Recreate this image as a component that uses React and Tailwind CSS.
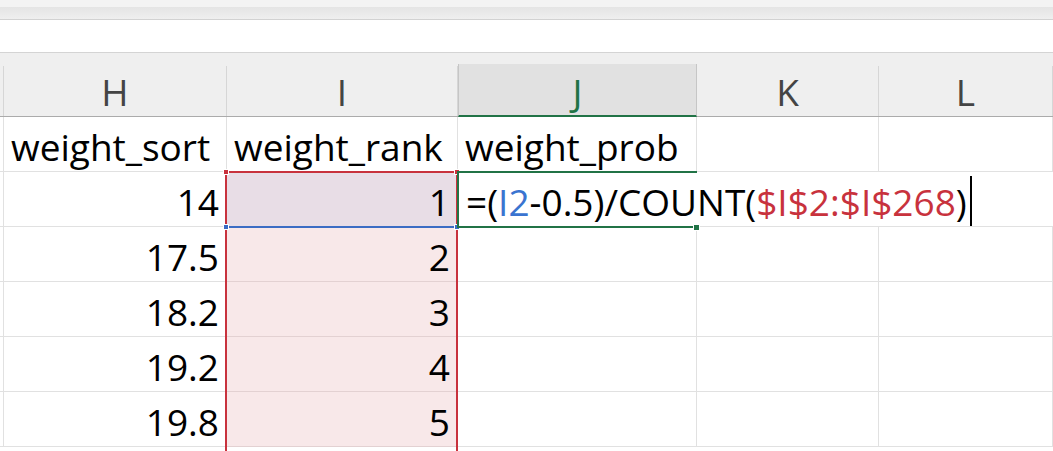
import React from 'react';

const font = { fontFamily: '"Open Sans", "Noto Sans", sans-serif' };

const COLS = [
  { key: 'H', w: 'w-[223px]' },
  { key: 'I', w: 'w-[231px]' },
  { key: 'J', w: 'w-[239px]' },
  { key: 'K', w: 'w-[182px]' },
  { key: 'L', w: 'flex-1' },
];

const rows = [
  { h: '14', i: '1' },
  { h: '17.5', i: '2' },
  { h: '18.2', i: '3' },
  { h: '19.2', i: '4' },
  { h: '19.8', i: '5' },
];

function Cell({ w, className = '', children }) {
  return (
    <div className={`${w} shrink-0 h-[55px] border-r border-b border-[#e1e1e1] flex items-end pb-[6px] px-[7px] ${className}`}>
      {children}
    </div>
  );
}

function Handle({ className }) {
  return <div className={`absolute w-[6px] h-[6px] border border-white ${className}`} />;
}

export default function App() {
  return (
    <div className="w-[1053px] h-[451px] overflow-hidden bg-white text-black" style={font}>
      {/* ribbon edge */}
      <div className="h-[7px] bg-[#f3f3f3]" />
      <div className="h-[12px] bg-gradient-to-b from-[#e4e4e4] to-[#efefef]" />
      <div className="h-px bg-[#d2d2d2]" />
      <div className="h-[33px] bg-white border-b border-[#d4d4d4]" />

      {/* column headers */}
      <div className="h-[64px] bg-[#efefef] border-b border-[#ababab] flex items-end text-[37px] text-[#444444]">
        <div className="w-[4px] h-[50px] border-r border-[#d6d6d6] shrink-0" />
        {COLS.map((c) =>
          c.key === 'J' ? (
            <div
              key={c.key}
              className={`${c.w} shrink-0 h-[53px] -mb-px bg-[#e1e1e1] border-l border-r border-[#c6c6c6] border-b-2 border-b-[#217346] flex items-end justify-center pb-[1px] leading-none text-[#217346]`}
            >
              <span className="pb-[4px]">{c.key}</span>
            </div>
          ) : (
            <div
              key={c.key}
              className={`${c.w} shrink-0 h-[50px] border-r border-[#d6d6d6] flex items-end justify-center pb-[6px] leading-none`}
            >
              {c.key}
            </div>
          )
        )}
      </div>

      {/* grid body */}
      <div className="relative text-[37px] leading-none">
        <div className="flex">
          <div className="w-[4px] h-[55px] border-r border-b border-[#e1e1e1] shrink-0" />
          <Cell w="w-[223px]">weight_sort</Cell>
          <Cell w="w-[231px]">weight_rank</Cell>
          <Cell w="w-[239px]">weight_prob</Cell>
          <Cell w="w-[182px]" />
          <Cell w="flex-1" />
        </div>

        {rows.map((r, idx) => (
          <div key={r.h} className="flex">
            <div className="w-[4px] h-[55px] border-r border-b border-[#e1e1e1] shrink-0" />
            <Cell w="w-[223px]" className="justify-end">{r.h}</Cell>
            <Cell
              w="w-[231px]"
              className={`justify-end ${idx === 0 ? 'bg-[#e8dde6]' : 'bg-[#f8e8e9] border-b-[#e3d1d2] border-r-[#e3d1d2]'}`}
            >
              {r.i}
            </Cell>
            {idx === 0 ? (
              <div className="flex-1 h-[55px] border-b border-[#e1e1e1] flex items-end pb-[6px] pl-[8px] whitespace-nowrap">
                <span>=(</span>
                <span className="text-[#3a74d0]">I2</span>
                <span>-0.5)/COUNT(</span>
                <span className="text-[#c8323d]">$I$2:$I$268</span>
                <span>)</span>
                <span className="w-[2px] h-[50px] bg-black ml-[3px] -mb-[6px]" />
              </div>
            ) : (
              <>
                <Cell w="w-[239px]" />
                <Cell w="w-[182px]" />
                <Cell w="flex-1" />
              </>
            )}
          </div>
        ))}

        {/* range reference highlight on column I */}
        <div className="absolute left-[225px] top-[54px] w-[233px] h-[400px] border-2 border-[#c8323d] pointer-events-none" />
        <div className="absolute left-[225px] top-[109px] w-[233px] h-[2px] bg-[#3b6cc4]" />
        <Handle className="left-[223px] top-[52px] bg-[#c8323d]" />
        <Handle className="left-[454px] top-[52px] bg-[#c8323d]" />
        <Handle className="left-[223px] top-[107px] bg-[#3b6cc4]" />
        <Handle className="left-[454px] top-[107px] bg-[#3b6cc4]" />

        {/* active cell J2 (edit mode, open on the right) */}
        <div className="absolute left-[457px] top-[54px] w-[240px] h-[57px] border-l-2 border-t-2 border-b-2 border-[#217346] pointer-events-none" />
        <Handle className="left-[693px] top-[107px] bg-[#217346] w-[7px] h-[7px]" />
      </div>
    </div>
  );
}
